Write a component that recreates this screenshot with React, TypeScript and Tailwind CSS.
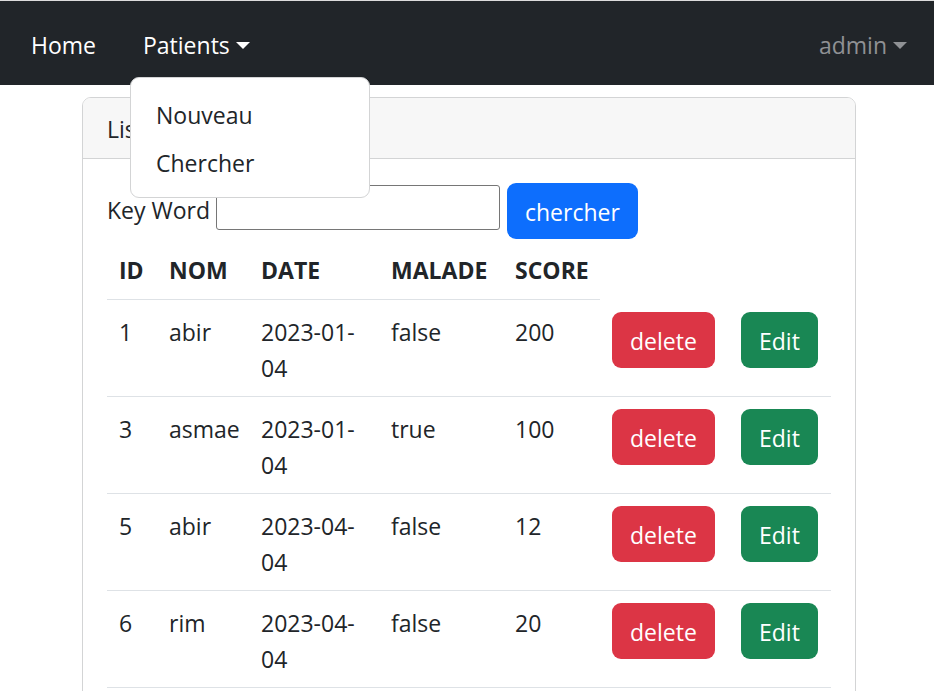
import React from "react";

interface Patient {
  id: number;
  nom: string;
  date: string;
  malade: boolean;
  score: number;
}

const patients: Patient[] = [
  { id: 1, nom: "abir", date: "2023-01-04", malade: false, score: 200 },
  { id: 3, nom: "asmae", date: "2023-01-04", malade: true, score: 100 },
  { id: 5, nom: "abir", date: "2023-04-04", malade: false, score: 12 },
  { id: 6, nom: "rim", date: "2023-04-04", malade: false, score: 20 },
];

function Caret({ color }: { color: string }) {
  return (
    <span
      className={`inline-block w-0 h-0 ml-[6px] align-[5px] border-x-[7px] border-x-transparent border-t-[7px] ${color}`}
    />
  );
}

// text cells sit ~2px lower than the default padding gives with this font
const cell = "px-[12px] pt-[14px] pb-[10px] align-top border-b border-[#dee2e6]";
const btnCell = "p-[12px] align-top border-b border-[#dee2e6]";

export default function App() {
  return (
    <div
      className="relative min-h-screen bg-white text-[#212529] text-[23px] leading-[36px]"
      style={{ fontFamily: '"Open Sans", "Noto Sans", sans-serif' }}
    >
      <div className="h-px bg-[#dcdcdc]" />

      {/* Navbar */}
      <nav className="flex items-center h-[84px] bg-[#212529] pr-[27px] pt-[4px]">
        <a className="block w-[131px] pl-[31px] text-white">Home</a>
        <a className="block pl-[12px] text-white">
          Patients
          <Caret color="border-t-white" />
        </a>
        <a className="block ml-auto text-[#8f9194]">
          admin
          <Caret color="border-t-[#8f9194]" />
        </a>
      </nav>

      {/* Dropdown menu */}
      <div className="absolute left-[130px] top-[77px] z-10 w-[240px] pt-[13px] pb-[10px] bg-white border border-[#d3d4d5] rounded-[9px]">
        <a className="block px-[25px] py-[6px]">Nouveau</a>
        <a className="block px-[25px] py-[6px]">Chercher</a>
      </div>

      {/* Card */}
      <div className="ml-[82px] mt-[12px] w-[774px] border border-[#d3d4d5] rounded-[9px] overflow-hidden">
        <div className="bg-[#f7f7f7] border-b border-[#d3d4d5] px-[24px] pt-[13px] pb-[11px]">
          Liste Patients
        </div>
        <div className="p-[24px]">
          <form className="flex items-start">
            <label className="w-[109px] mt-[9px]">Key Word</label>
            <input className="w-[284px] h-[45px] mt-[2px] border border-[#767676] rounded-[3px]" />
            <button
              type="button"
              className="ml-[7px] h-[56px] px-[18px] pt-[2px] rounded-[9px] bg-[#0d6efd] text-white"
            >
              chercher
            </button>
          </form>

          <table className="w-[724px] table-fixed border-collapse">
            <colgroup>
              <col className="w-[50px]" />
              <col className="w-[92px]" />
              <col className="w-[130px]" />
              <col className="w-[124px]" />
              <col className="w-[97px]" />
              <col className="w-[129px]" />
              <col className="w-[102px]" />
            </colgroup>
            <thead>
              <tr>
                {["ID", "NOM", "DATE", "MALADE", "SCORE"].map((h) => (
                  <th
                    key={h}
                    className="px-[12px] pt-[13px] pb-[11px] text-left font-bold border-b border-[#dee2e6]"
                  >
                    {h}
                  </th>
                ))}
              </tr>
            </thead>
            <tbody>
              {patients.map((p) => (
                <tr key={p.id}>
                  <td className={cell}>{p.id}</td>
                  <td className={cell}>{p.nom}</td>
                  <td className={cell}>
                    <span className="block">{p.date.slice(0, 8)}</span>
                    <span className="block">{p.date.slice(8)}</span>
                  </td>
                  <td className={cell}>{String(p.malade)}</td>
                  <td className={cell}>{p.score}</td>
                  <td className={btnCell}>
                    <button className="h-[56px] px-[18px] pt-[2px] rounded-[9px] bg-[#dc3545] text-white">
                      delete
                    </button>
                  </td>
                  <td className={btnCell}>
                    <button className="h-[56px] px-[18px] pt-[2px] rounded-[9px] bg-[#198754] text-white">
                      Edit
                    </button>
                  </td>
                </tr>
              ))}
            </tbody>
          </table>
        </div>
      </div>
    </div>
  );
}
